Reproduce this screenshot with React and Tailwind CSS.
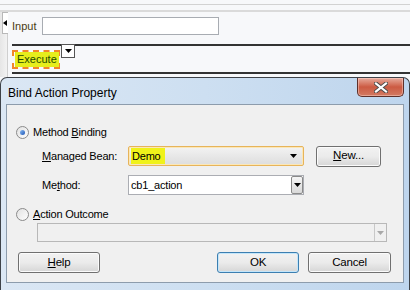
import React from "react";

const ui = "font-['Liberation_Sans',Arial,sans-serif]";

const Arrow = ({ color = "#000" }) => (
  <svg width="7" height="4" viewBox="0 0 7 4">
    <path d="M0 0H7L3.5 4Z" fill={color} />
  </svg>
);

const Radio = ({ checked }) => (
  <span className="w-[13px] h-[13px] rounded-full border border-[#8a8a8a] bg-gradient-to-br from-[#e2e2e2] to-[#fdfdfd] flex items-center justify-center">
    {checked && (
      <span className="w-[5px] h-[5px] rounded-full bg-gradient-to-br from-[#8cbcf2] to-[#1d55b6]" />
    )}
  </span>
);

const WinButton = ({ children, primary, className = "" }) => (
  <button
    className={`h-[21px] rounded-[3px] border ${
      primary ? "border-[#3c7fb1] shadow-[inset_0_0_0_1px_#c4e6fa]" : "border-[#707070] shadow-[inset_0_0_0_1px_#fbfbfb]"
    } bg-gradient-to-b from-[#f2f2f2] via-[#ebebeb] to-[#d6d6d6] text-[11.5px] text-black ${className}`}
  >
    {children}
  </button>
);

const CloseButton = () => (
  <div className="w-[47px] h-[19px] rounded-b-[5px] border border-t-0 border-[#5e302a] bg-gradient-to-b from-[#e6aa9c] via-[#cc5a42] to-[#d27a62] flex items-center justify-center shadow-[inset_0_0_0_1px_rgba(255,220,210,0.45)]">
    <svg width="14" height="11" viewBox="0 0 14 11">
      <path d="M2 1.5L12 9.5M12 1.5L2 9.5" stroke="#4a4a4a" strokeWidth="4" strokeLinecap="square" />
      <path d="M2 1.5L12 9.5M12 1.5L2 9.5" stroke="#fff" strokeWidth="2.2" strokeLinecap="square" />
    </svg>
  </div>
);

export default function App() {
  return (
    <div className={`w-[410px] h-[290px] overflow-hidden bg-[#f7f8fa] flex flex-col ${ui}`}>
      {/* designer canvas */}
      <div className="h-[77px] flex flex-col">
        <div className="h-[4px]" />
        <div className="h-px bg-[#d2d2d2]" />
        <div className="h-[5px]" />
        <div className="h-[2px] bg-[#dadada]" />
        <div className="flex-1 flex">
          <div className="w-[8px] flex flex-col bg-gradient-to-r from-[#e6e6e6] to-[#f2f2f2] border-r border-[#cfcfcf]">
            <div className="ml-[2px] h-[22px] w-[6px] bg-white border border-[#b8b8b8] border-r-0 flex items-center">
              <svg width="4" height="6" viewBox="0 0 4 6">
                <path d="M4 0V6L0 3Z" fill="#000" />
              </svg>
            </div>
          </div>
          <div className="flex-1 flex flex-col pl-[4px] text-[11px]">
            <div className="h-[20px] mt-[4px] flex items-center">
              <span className="w-[30px] text-[#4a3c12]">Input</span>
              <div className="w-[177px] h-[18px] bg-white border border-[#a8acb2]" />
            </div>
            <div className="h-[2px] mt-[8px] bg-[#333] relative">
              <div className="absolute left-[49px] top-0 w-[14px] h-[14px] bg-white border border-[#555] flex items-center justify-center">
                <Arrow />
              </div>
            </div>
            <div className="mt-[4px] w-[48px] h-[19px] border-2 border-dashed border-[#f2862a] flex items-center">
              <span className="ml-[1px] px-[2px] h-[15px] leading-[15px] bg-[#e6ee1c] text-[#1f4a00] text-[11px]">Execute</span>
            </div>
            <div className="h-[2px] mt-[3px] bg-[#333]" />
          </div>
        </div>
      </div>

      {/* dialog */}
      <div className="flex-1 flex flex-col rounded-t-[7px] border border-[#3e4248] border-b-0 bg-gradient-to-r from-[#dbe7f4] via-[#cddff1] to-[#bed5ed]">
        <div className="h-[26px] flex items-start">
          <span className="mt-[8px] ml-[7px] text-[12px] text-black leading-[14px]">Bind Action Property</span>
          <div className="ml-auto mr-[5px]">
            <CloseButton />
          </div>
        </div>
        <div className="mx-[5px] h-[179px] border border-[#8d9cac] bg-[#f0f0f0] flex flex-col text-[11px] tracking-[-0.2px] text-black">
          <div className="mt-[21px] ml-[9px] h-[13px] flex items-center gap-[4px]">
            <Radio checked />
            <span>Method <u>B</u>inding</span>
          </div>
          <div className="mt-[7px] ml-[35px] h-[20px] flex items-center">
            <span className="w-[86px]"><u>M</u>anaged Bean:</span>
            <div className="w-[176px] h-[20px] rounded-[2px] border border-[#e7b45a] bg-gradient-to-b from-[#f3f3f3] to-[#dddddd] flex items-center pr-[6px] shadow-[inset_0_0_0_1px_#fbe7b8]">
              <span className="ml-[2px] pl-[1px] w-[34px] h-[16px] leading-[16px] bg-[#f0f21a]">Demo</span>
              <span className="ml-auto"><Arrow /></span>
            </div>
            <WinButton className="ml-[12px] w-[65px]"><u>N</u>ew...</WinButton>
          </div>
          <div className="mt-[9px] ml-[35px] h-[20px] flex items-center">
            <span className="w-[86px]">Me<u>t</u>hod:</span>
            <div className="w-[176px] h-[20px] border border-[#abadb3] bg-white flex items-center">
              <span className="ml-[2px]">cb1_action</span>
              <div className="ml-auto w-[12px] h-[18px] rounded-[2px] border border-[#8a8a8a] bg-gradient-to-b from-[#f5f5f5] to-[#d9d9d9] flex items-center justify-center">
                <Arrow />
              </div>
            </div>
          </div>
          <div className="mt-[13px] ml-[9px] h-[13px] flex items-center gap-[4px]">
            <Radio />
            <span><u>A</u>ction Outcome</span>
          </div>
          <div className="mt-[2px] ml-[30px] w-[350px] h-[19px] border border-[#b8b8b8] bg-[#f0f0f0] flex items-center justify-end">
            <div className="w-[12px] h-[17px] border-l border-[#c8c8c8] flex items-center justify-center">
              <Arrow color="#a8a8a8" />
            </div>
          </div>
          <div className="mt-[10px] ml-[11px] flex">
            <WinButton className="w-[82px]"><u>H</u>elp</WinButton>
            <WinButton primary className="ml-[117px] w-[82px]">OK</WinButton>
            <WinButton className="ml-[9px] w-[83px]">Cancel</WinButton>
          </div>
        </div>
        <div className="flex-1" />
      </div>
    </div>
  );
}
